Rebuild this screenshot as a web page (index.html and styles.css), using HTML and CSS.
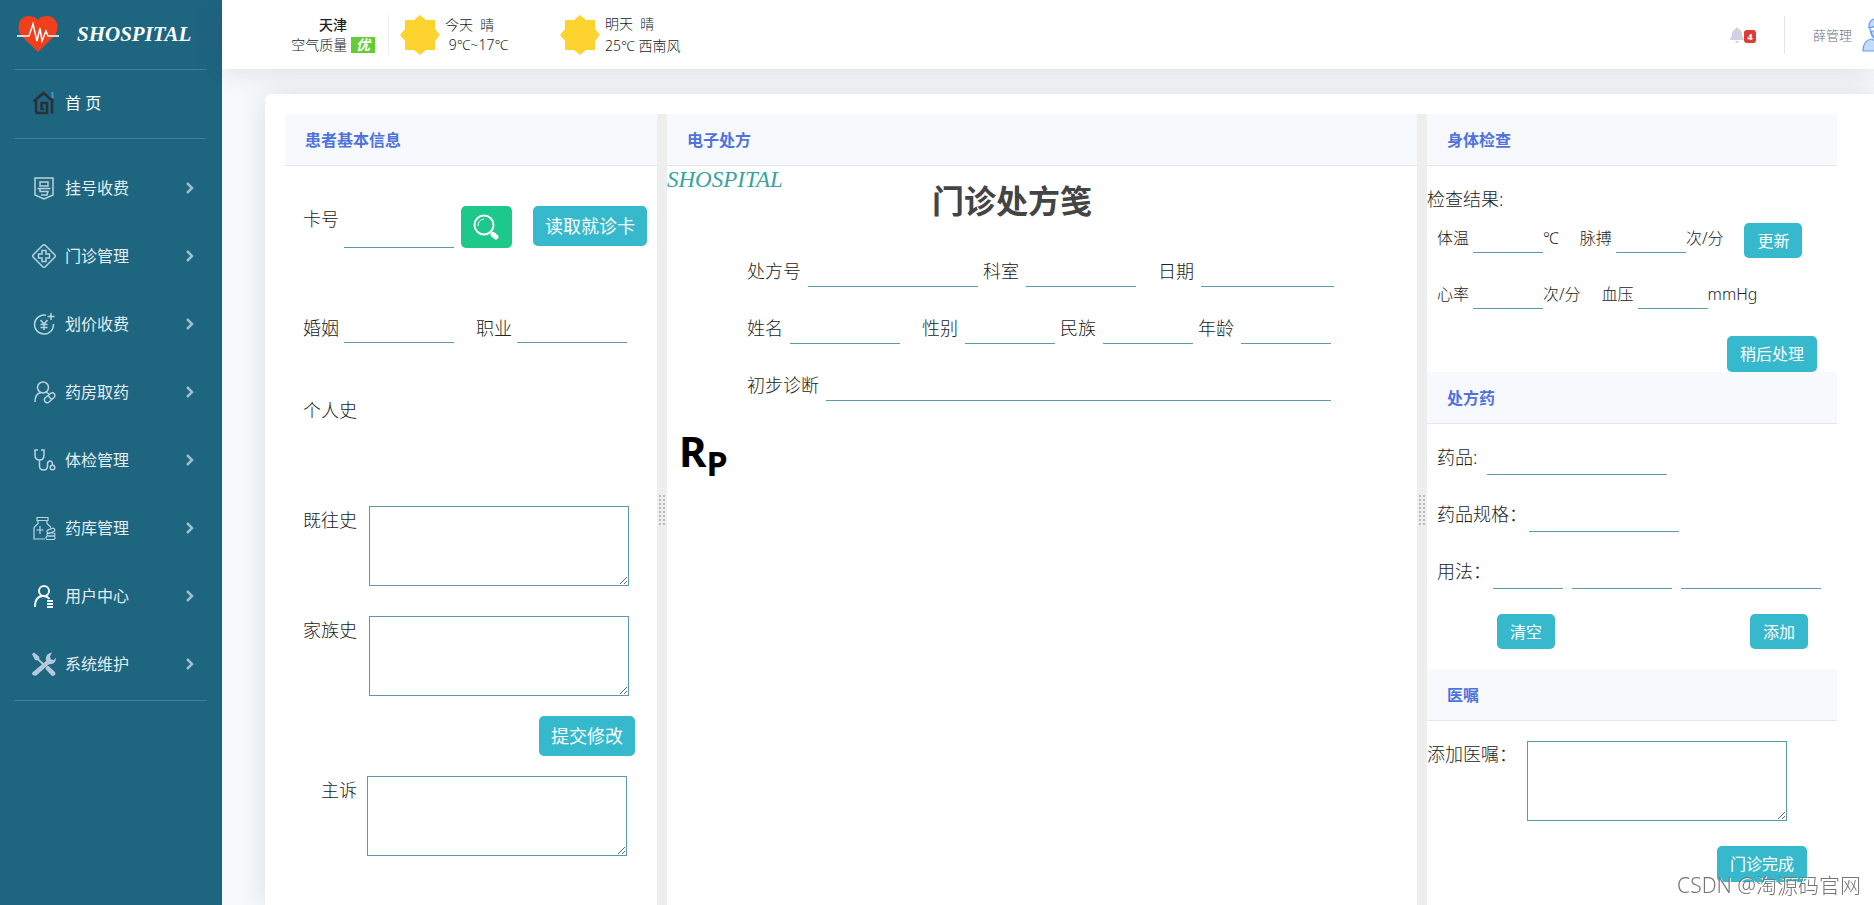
FILE: index.html
```html
<!DOCTYPE html>
<html lang="zh-CN">
<head>
<meta charset="utf-8">
<title>SHOSPITAL</title>
<link rel="stylesheet" href="styles.css">
</head>
<body>
<div class="app">
  <nav class="sidebar">
    <a class="brand" href="#">
      <svg class="brand-icon" viewBox="0 0 42 38"><path fill="#f03f1d" d="M21 37 4.500 21C-1 14 1 1 12 1c4 0 7 1.500 9 4 2-2.500 5-4 9-4 11 0 13 13 7.500 20z"/><path fill="none" stroke="#fff" stroke-width="1.500" d="M0 21h12l4-12 4 17 3-13 2 13 4-10 2 5h11"/></svg>
      <span class="brand-name">SHOSPITAL</span>
    </a>
    <a class="nav-home" href="#">
      <svg class="nav-icon" viewBox="0 0 24 24" fill="none" stroke="#2b3037" stroke-width="2.500"><path d="M1.500 10.500 11.500 2 21.500 10.500M4 9v11q0 2 2 2h9V12H9.500v6h2.500M20 9v13.500"/><path stroke="#2f9fe0" stroke-width="2" d="M20.500 1v6"/></svg>
      <span>首 页</span>
    </a>
    <div class="nav-list">
      <a class="nav-item" href="#"><svg class="nav-icon" viewBox="0 0 24 24"><path d="M3 2h18v17l-9 4-9-4zM8 6h8v4H8zM5.500 12.500h13M8 12.500v3h8l-1 3.500H9"/></svg><span>挂号收费</span><svg class="chevron" viewBox="0 0 8 12"><path d="m1 1 5 5-5 5"/></svg></a>
      <a class="nav-item" href="#"><svg class="nav-icon" viewBox="0 0 24 24"><path d="M10.500 1.500Q12 0 13.500 1.500l9 9q1.500 1.500 0 3l-9 9q-1.500 1.500-3 0l-9-9q-1.500-1.500 0-3zM10 6.500h4V10h3.500v4H14v3.500h-4V14H6.500v-4H10z"/></svg><span>门诊管理</span><svg class="chevron" viewBox="0 0 8 12"><path d="m1 1 5 5-5 5"/></svg></a>
      <a class="nav-item" href="#"><svg class="nav-icon" viewBox="0 0 24 24"><path d="M14 3.300A9.500 9.500 0 1 0 21.500 12M19 1v7M15.500 4.500h7M8.500 8l3.500 4 3.500-4M12 12v6M8.500 12.500h7M8.500 15.500h7"/></svg><span>划价收费</span><svg class="chevron" viewBox="0 0 8 12"><path d="m1 1 5 5-5 5"/></svg></a>
      <a class="nav-item" href="#"><svg class="nav-icon" viewBox="0 0 24 24"><circle cx="11" cy="7.500" r="5.500"/><path d="M3 22c0-6 3-9 6-9.500M14 12l3 2M13.500 17.500l5-4a2.500 2.500 0 0 1 3.500 4l-5 4.500a2.800 2.800 0 0 1-3.500-4.500zM16 15.500l3.500 4"/></svg><span>药房取药</span><svg class="chevron" viewBox="0 0 8 12"><path d="m1 1 5 5-5 5"/></svg></a>
      <a class="nav-item" href="#"><svg class="nav-icon" viewBox="0 0 24 24"><path d="M6 2H3v5q0 5 4.500 5T12 7V2H9M7.500 12v6q0 4 4 4t4-4v-2q0-3 2.500-3t2.500 4"/><circle cx="20.500" cy="19.500" r="2.300"/></svg><span>体检管理</span><svg class="chevron" viewBox="0 0 8 12"><path d="m1 1 5 5-5 5"/></svg></a>
      <a class="nav-item" href="#"><svg class="nav-icon thin" viewBox="0 0 24 24"><path d="M5 1.500h11v3H5zM6 4.500v3l-4 4V23h11M15 4.500v3l4 4M8 10v8M4.500 14h7"/><rect x="15" y="13" width="8" height="3.500" rx="1.700" transform="rotate(-20 19 15)"/><rect x="15" y="17" width="8" height="3" rx="1.500"/><rect x="14" y="20" width="9" height="3.500" rx="1.500"/></svg><span>药库管理</span><svg class="chevron" viewBox="0 0 8 12"><path d="m1 1 5 5-5 5"/></svg></a>
      <a class="nav-item" href="#"><svg class="nav-icon bright" viewBox="0 0 24 24"><circle cx="12" cy="7" r="5"/><path d="M3 23c0-8 3-11 8-11 3 0 5 1 6.500 3M15 17h6M15 20h6M15 23h6"/></svg><span>用户中心</span><svg class="chevron" viewBox="0 0 8 12"><path d="m1 1 5 5-5 5"/></svg></a>
      <a class="nav-item" href="#"><svg class="nav-icon solid" viewBox="0 0 24 24"><path d="m0 2 2-1.500 5 4 .5 3 4 3.500-1.500 1.500-4-4-3-.5zM14 15l2-1.500 7 6.500q1 2-.5 3.200t-3 .3l-6-6.500zM1 20 14 9q-1-6 4-8l2-.5-2 4 1 3 3 .5 2-2.500q0 7-7.500 7L5 23q-2 1.500-4 0t0-3z"/></svg><span>系统维护</span><svg class="chevron" viewBox="0 0 8 12"><path d="m1 1 5 5-5 5"/></svg></a>
    </div>
  </nav>

  <div class="main">
    <header class="topbar">
      <div class="city">
        <strong class="city-name">天津</strong>
        <span class="air">空气质量 <em class="air-level">优</em></span>
      </div>
      <div class="weather">
        <svg class="sun" viewBox="0 0 40 40" fill="#fdd32f"><path d="m20 0 6 5h9v9l5 6-5 6v9h-9l-6 5-6-5H5v-9l-5-6 5-6V5h9z"/></svg>
        <div><div>今天&nbsp; 晴</div><div>&nbsp;9℃~17℃</div></div>
      </div>
      <div class="weather tomorrow">
        <svg class="sun" viewBox="0 0 40 40" fill="#fdd32f"><path d="m20 0 6 5h9v9l5 6-5 6v9h-9l-6 5-6-5H5v-9l-5-6 5-6V5h9z"/></svg>
        <div><div>明天&nbsp; 晴</div><div>25℃ 西南风</div></div>
      </div>
      <div class="account">
        <button class="bell" type="button" aria-label="通知">
          <svg class="bell-icon" viewBox="0 0 14 16" fill="#d1d3e2"><path d="M7 0q1 0 1 1.500Q12 3 12 7q0 3 2 5v1H0v-1q2-2 2-5 0-4 4-5.500Q6 0 7 0M5 14h4q0 2-2 2t-2-2"/></svg>
          <span class="bell-count">4</span>
        </button>
        <a class="user" href="#">
          <span>薛管理</span>
          <svg class="avatar" viewBox="0 0 36 36" fill="#c3dcfb" stroke="#6d9eeb" stroke-width="1.200"><path d="M1 34q0-11 9-12l7 5 8-5q10 1 10 12z"/><path fill="#fff" d="M8 10h20q0 12-10 14Q8 22 8 10z"/><path d="M7 11Q6 1 18 1t11 10q-10-4-22 0zM9 14h18q0 8-9 9-8-1-9-9z"/></svg>
        </a>
      </div>
    </header>

    <main class="card">
      <section class="pane">
        <h2 class="pane-title">患者基本信息</h2>
        <form class="patient">
          <div class="line card-line">
            <label for="card">卡号</label><input class="field w110" id="card">
            <button class="btn search" type="button" aria-label="查询"><svg viewBox="0 0 26 26" fill="none" stroke="#fff" stroke-width="2"><circle cx="11" cy="11" r="9.500"/><path stroke-width="1" d="M5 12q0-6 6-7"/><path stroke-width="5" stroke-linecap="round" d="m20 20.500 3 2.500"/></svg></button>
            <button class="btn" type="button">读取就诊卡</button>
          </div>
          <div class="line marriage">
            <label for="marriage">婚姻</label><input class="field w110" id="marriage">
            <label class="spaced" for="job">职业</label><input class="field w110" id="job">
          </div>
          <div class="history"><span>个人史</span></div>
          <div class="history"><label for="past">既往史</label><textarea class="area" id="past"></textarea></div>
          <div class="history"><label for="family">家族史</label><textarea class="area" id="family"></textarea></div>
          <div class="submit"><button class="btn" type="button">提交修改</button></div>
          <div class="history complaint"><label for="complaint">主诉</label><textarea class="area" id="complaint"></textarea></div>
        </form>
      </section>

      <div class="splitter"><span class="grip"></span></div>

      <section class="pane">
        <h2 class="pane-title">电子处方</h2>
        <div class="rx-head">
          <span class="rx-brand">SHOSPITAL</span>
          <h1 class="rx-title">门诊处方笺</h1>
        </div>
        <form class="rx-form">
          <div class="line">
            <label for="rx-no">处方号</label><input class="field w170" id="rx-no">
            <label for="dept">科室</label><input class="field w110" id="dept">
            <label class="spaced" for="date">日期</label><input class="field w133" id="date">
          </div>
          <div class="line">
            <label for="name">姓名</label><input class="field w110" id="name">
            <label class="spaced" for="sex">性别</label><input class="field w90" id="sex">
            <label for="nation">民族</label><input class="field w90" id="nation">
            <label for="age">年龄</label><input class="field w90" id="age">
          </div>
          <div class="line">
            <label for="diag">初步诊断</label><input class="field w505" id="diag">
          </div>
        </form>
        <div class="rp"><span>R</span><span class="rp-p">P</span></div>
      </section>

      <div class="splitter"><span class="grip"></span></div>

      <section class="pane">
        <h2 class="pane-title">身体检查</h2>
        <form class="exam">
          <p class="exam-title">检查结果:</p>
          <div class="vitals">
            <label for="temp">体温</label><input class="field w70" id="temp"><span>℃</span>
            <label class="spaced" for="pulse">脉搏</label><input class="field w70" id="pulse"><span>次/分</span>
            <button class="btn small update" type="button">更新</button>
          </div>
          <div class="vitals">
            <label for="heart">心率</label><input class="field w70" id="heart"><span>次/分</span>
            <label class="spaced" for="bp">血压</label><input class="field w70" id="bp"><span>mmHg</span>
          </div>
          <div class="later"><button class="btn small" type="button">稍后处理</button></div>
        </form>

        <h2 class="pane-title">处方药</h2>
        <form class="drug">
          <div class="drug-line short"><label for="drug">药品:</label><input class="field w180" id="drug"></div>
          <div class="drug-line"><label for="spec">药品规格：</label><input class="field w150" id="spec"></div>
          <div class="drug-line"><label for="use">用法：</label>
            <div class="usage"><input class="field w70" id="use"><input class="field w100" aria-label="频次"><input class="field w140" aria-label="说明"></div>
          </div>
          <div class="drug-actions"><button class="btn small" type="button">清空</button><button class="btn small" type="button">添加</button></div>
        </form>

        <h2 class="pane-title">医嘱</h2>
        <form class="advice">
          <div class="advice-line"><label for="advice">添加医嘱：</label><textarea class="area" id="advice"></textarea></div>
          <div class="finish"><button class="btn small" type="button">门诊完成</button></div>
        </form>
      </section>
    </main>
  </div>
</div>
<div class="watermark">CSDN @淘源码官网</div>
</body>
</html>
```

FILE: styles.css
```css
* { box-sizing: border-box; }

body {
  margin: 0;
  font-family: "Noto Sans", "Noto Sans CJK SC", sans-serif;
  font-size: 18px;
  font-weight: 300;
  line-height: 28px;
  color: #222;
  background: #f8f9fc;
}

a { color: inherit; text-decoration: none; }
h1, h2, p { margin: 0; }
input, textarea, button { font: inherit; }

.app {
  display: flex;
  height: 100vh;
  overflow: hidden;
}

/* Sidebar */
.sidebar {
  flex: 0 0 222px;
  padding: 0 16px 0 14px;
  background: #1e6580;
  color: #e4eef2;
  font-size: 16px;
  font-weight: 400;
}

.brand {
  display: flex;
  align-items: center;
  gap: 18px;
  height: 70px;
  padding: 0 0 2px 3px;
  border-bottom: 1px solid #437f97;
}

.brand-icon { width: 42px; height: 38px; }

.brand-name {
  font-family: "Monotype Corsiva", "Z003", "URW Chancery L", "Liberation Serif", serif;
  font-size: 21px;
  font-style: italic;
  font-weight: 700;
  color: #fff;
}

.nav-home {
  display: flex;
  align-items: center;
  gap: 9px;
  height: 69px;
  padding: 0 0 3px 18px;
  border-bottom: 1px solid #437f97;
  color: #fff;
}

.nav-list {
  padding: 15px 0 2px;
  border-bottom: 1px solid #437f97;
}

.nav-item {
  display: flex;
  align-items: center;
  gap: 9px;
  height: 68px;
  padding: 0 12px 0 18px;
}

.nav-icon {
  width: 24px;
  height: 24px;
}

.nav-item .nav-icon {
  fill: none;
  stroke: #b9d4e0;
  stroke-width: 1.5;
}

.nav-item .thin { stroke-width: 1.2; }
.nav-item .bright { stroke: #f0f7fa; stroke-width: 2; }
.nav-item .solid { fill: #b5c9dc; stroke: none; }

.chevron {
  width: 8px;
  height: 12px;
  margin-left: auto;
  fill: none;
  stroke: #9dbecb;
  stroke-width: 2.5;
}

/* Top bar */
.main {
  flex: 1;
  min-width: 0;
  display: flex;
  flex-direction: column;
}

.topbar {
  position: relative;
  z-index: 1;
  flex: 0 0 69px;
  display: flex;
  align-items: center;
  overflow: hidden;
  padding-left: 69px;
  background: #fff;
  box-shadow: 0 2px 28px rgba(58, 59, 69, 0.15);
  font-size: 14px;
  line-height: 20px;
  color: #222;
  white-space: nowrap;
}

.city {
  display: flex;
  flex-direction: column;
  align-items: flex-end;
  width: 98px;
  padding-right: 13px;
  border-right: 1px solid #f0f0f0;
}

.city-name { margin-right: 28px; font-weight: 500; }

.air-level {
  display: inline-block;
  width: 24px;
  line-height: 16px;
  background: #6c3;
  color: #fff;
  font-weight: 700;
  text-align: center;
}

.weather {
  display: flex;
  align-items: center;
  gap: 5px;
  width: 160px;
  margin-left: 11px;
}

.weather + .weather { margin-left: 0; }
.tomorrow { line-height: 22px; }
.sun { width: 40px; height: 40px; }

.account {
  display: flex;
  align-items: center;
  margin-left: auto;
  margin-right: -24px;
}

.bell {
  display: flex;
  align-items: center;
  padding: 0;
  border: 0;
  background: none;
}

.bell-icon { width: 14px; height: 16px; }

.bell-count {
  width: 12px;
  margin-top: 4px;
  border-radius: 3px;
  background: #e03c31;
  color: #fff;
  font-size: 9px;
  font-weight: 700;
  line-height: 13px;
}

.user {
  display: flex;
  align-items: center;
  gap: 10px;
  height: 38px;
  margin-left: 28px;
  padding-left: 28px;
  border-left: 1px solid #e3e6f0;
  color: #6e707e;
  font-size: 13px;
}

.avatar { width: 36px; height: 36px; }

/* Card and panes */
.card {
  flex: 1;
  display: grid;
  grid-template-columns: 372fr 10px 750fr 10px 410fr;
  margin: 25px 0 0 43px;
  padding: 20px 37px 0 20px;
  border-radius: 6px 0 0 0;
  background: #fff;
  box-shadow: 0 2px 28px rgba(58, 59, 69, 0.15);
  white-space: nowrap;
}

.pane { min-width: 0; }

.pane-title {
  padding: 12px 20px 11px;
  border-bottom: 1px solid #e3e6f0;
  background: #f8f9fc;
  color: #4e73df;
  font-size: 16px;
  font-weight: 700;
}

.splitter {
  display: flex;
  align-items: center;
  justify-content: center;
  background: #eee;
}

.grip {
  width: 8px;
  height: 32px;
  background: radial-gradient(circle, #bbb 1px, transparent 1px) 0 0 / 4px 4px;
}

.field {
  min-width: 0;
  padding: 0;
  border: 0;
  border-bottom: 1px solid #5a9bab;
  background: transparent;
  outline: none;
}

.w70 { width: 70px; }
.w90 { width: 90px; }
.w100 { width: 100px; }
.w110 { width: 110px; }
.w133 { width: 133px; }
.w140 { width: 140px; }
.w150 { width: 150px; }
.w170 { width: 170px; }
.w180 { width: 180px; }
.w505 { width: 505px; }

.area {
  display: block;
  width: 260px;
  height: 80px;
  border: 1px solid #5a9bab;
  background: #fff;
}

.btn {
  height: 40px;
  padding: 0 12px;
  border: 0;
  border-radius: 5px;
  background: #36b9cc;
  color: #fff;
  font-weight: 400;
}

.btn.small {
  height: 36px;
  padding: 0 13px;
  font-size: 16px;
}

/* Patient */
.patient { padding: 40px 0 0 18px; }
.line { display: flex; line-height: 26px; }
.line .field { margin-left: 7px; }
.line label + .field + label { margin-left: 5px; }
.line label + .field + .spaced { margin-left: 22px; }
.patient .line .field { margin-left: 5px; }
.card-line { height: 42px; }

.search {
  height: 42px;
  width: 51px;
  margin: 0 21px 0 7px;
  background: #1cc88a;
}

.search svg { display: block; width: 26px; height: 26px; }
.marriage { margin: 67px 0 53px; height: 28px; }

.history {
  display: flex;
  gap: 12px;
  height: 80px;
  margin-bottom: 30px;
  line-height: 28px;
}

.submit {
  display: flex;
  justify-content: flex-end;
  margin: -10px 22px 20px 0;
}

.complaint { padding-left: 18px; gap: 10px; }

/* Prescription */
.rx-head { display: flex; height: 93px; }

.rx-brand {
  flex: 0 0 265px;
  font-family: "Monotype Corsiva", "Z003", "URW Chancery L", "Liberation Serif", serif;
  font-size: 23px;
  font-style: italic;
  font-weight: 400;
  color: #36a3a3;
}

.rx-title {
  padding-top: 14px;
  color: #444;
  font-size: 32px;
  line-height: 42px;
  font-weight: 700;
}

.rx-form {
  display: flex;
  flex-direction: column;
  gap: 29px;
  padding-left: 80px;
}

.rx-form .line { height: 28px; line-height: 24px; }

.rp {
  display: flex;
  margin: 27px 0 0 12px;
  color: #000;
  font-size: 42px;
  font-weight: 700;
  line-height: 46px;
}

.rp-p { padding-top: 15px; font-size: 34px; line-height: 40px; }

/* Examination */
.exam { padding-top: 19px; }
.exam-title { margin-bottom: 10px; }

.vitals {
  display: flex;
  align-items: flex-start;
  margin: 0 0 21px 10px;
  font-size: 16px;
  line-height: 30px;
}

.vitals .field { height: 30px; margin-left: 4px; }
.vitals .spaced { margin-left: 21px; }
.vitals .update { height: 35px; margin-left: 21px; }

.later {
  display: flex;
  justify-content: flex-end;
  margin: 27px 20px 0 0;
}

/* Drugs */
.drug { padding: 17px 0 20px 10px; }

.drug-line {
  display: flex;
  gap: 2px;
  height: 34px;
  margin-bottom: 23px;
  line-height: 32px;
}

.drug-line.short { gap: 10px; }
.usage { display: flex; gap: 9px; }

.drug-actions {
  display: flex;
  justify-content: space-between;
  padding: 2px 29px 0 60px;
}

.drug-actions .btn { height: 35px; }

/* Advice */
.advice { padding-top: 20px; }
.advice-line { display: flex; gap: 10px; line-height: 26px; }

.finish {
  display: flex;
  justify-content: flex-end;
  margin: 25px 30px 0 0;
}

.watermark {
  position: fixed;
  right: 13px;
  bottom: 6px;
  color: #777;
  font-size: 21px;
  font-weight: 300;
  text-shadow: 1px 1px 0 #fff;
}
```
